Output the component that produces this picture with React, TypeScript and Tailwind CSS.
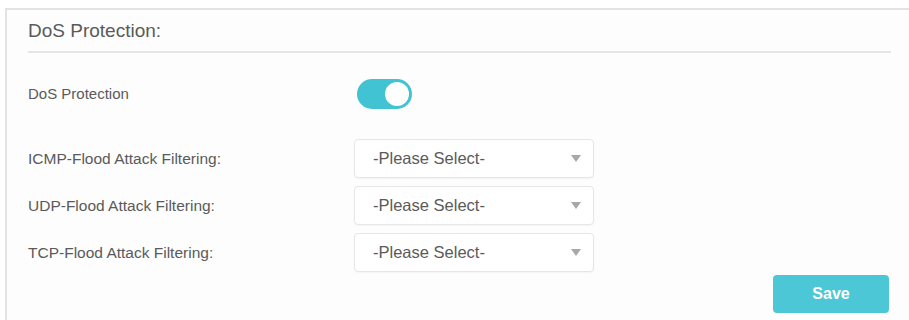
import React from "react";

function Select() {
  return (
    <div className="flex h-[39px] w-[240px] items-center justify-between rounded-[4px] border border-[#e6e6e6] bg-white pl-[18px] pr-[12px] shadow-[0_1px_2px_rgba(0,0,0,0.04)]">
      <span className="text-[16.5px] text-[#5a5a5a]">-Please Select-</span>
      <svg width="10" height="7" viewBox="0 0 10 7">
        <path d="M0 0 H10 L5 7 Z" fill="#a8a8a8" />
      </svg>
    </div>
  );
}

export default function App() {
  const rows = [
    "ICMP-Flood Attack Filtering:",
    "UDP-Flood Attack Filtering:",
    "TCP-Flood Attack Filtering:",
  ];
  return (
    <div
      className="h-[320px] w-[909px] overflow-hidden bg-white"
      style={{ fontFamily: '"Liberation Sans", Arial, sans-serif' }}
    >
      <div className="ml-[5px] mt-[8px] h-[312px] border-l-2 border-t-2 border-[#e3e3e3] bg-[#fdfdfd] pl-[21px] pr-[18px]">
        <div className="flex h-[43px] items-end border-b-2 border-[#e6e6e6] pb-[6px]">
          <span className="text-[19px] text-[#5a5a5a]">DoS Protection:</span>
        </div>
        <div className="mt-[26px] flex h-[30px] items-center">
          <span className="w-[329px] text-[15px] text-[#5a5a5a]">DoS Protection</span>
          <div className="flex h-[30px] w-[55px] items-center justify-end rounded-full bg-[#41c3d4] pr-[3px]">
            <div className="h-[24px] w-[24px] rounded-full bg-white" />
          </div>
        </div>
        <div className="mt-[30px] flex flex-col gap-[8px]">
          {rows.map((r) => (
            <div key={r} className="flex items-center">
              <span className="w-[326px] text-[15.5px] text-[#5a5a5a]">{r}</span>
              <Select />
            </div>
          ))}
        </div>
        <div className="mt-[3px] flex justify-end">
          <button className="mr-[2px] flex h-[38px] w-[116px] items-center justify-center rounded-[4px] bg-[#4cc7d5] text-[16px] font-bold text-white">
            Save
          </button>
        </div>
      </div>
    </div>
  );
}
